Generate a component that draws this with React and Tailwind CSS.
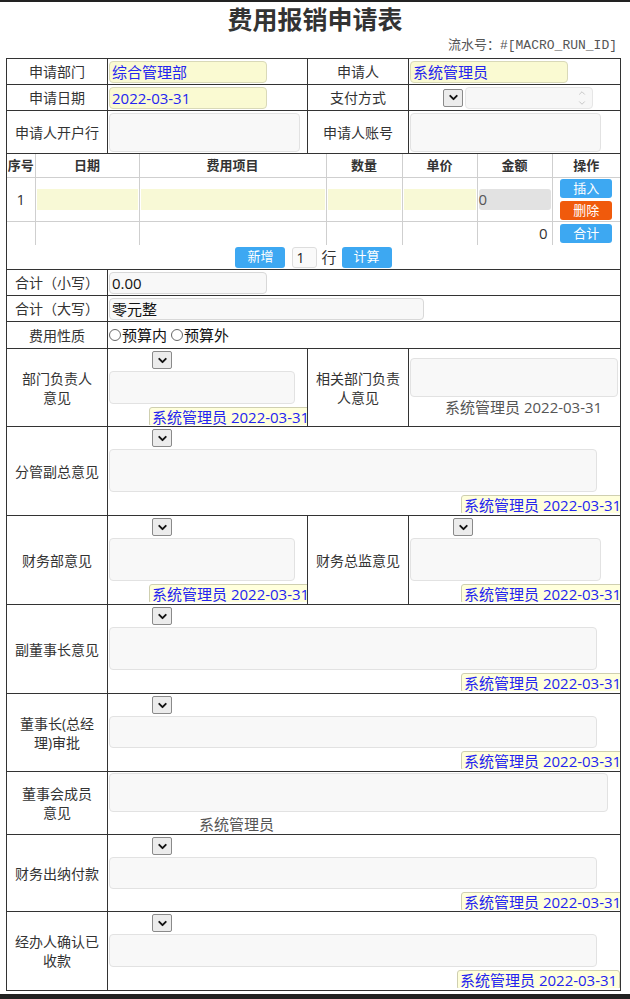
import React from "react";
import { ChevronDown, ChevronUp } from "lucide-react";

const LBL =
  "border border-[#333] px-[2px] text-center align-middle text-[14px] leading-[19px] text-[#333]";
const CELL = "border border-[#333] p-0 align-middle";
const CELLTOP = "border border-[#333] p-0 align-top";
const TH =
  "border border-[#cfcfcf] p-0 text-center align-middle text-[13px] font-bold text-[#333]";
const TD = "border border-[#cfcfcf] p-0 align-middle";
const BLUE =
  "flex h-[19px] w-[52px] items-center justify-center rounded-[3px] bg-[#3da8f2] text-[13px] leading-[19px] text-white";
const ORANGE =
  "flex h-[19px] w-[52px] items-center justify-center rounded-[3px] bg-[#f05a0c] text-[13px] leading-[19px] text-white";

function Sel({ w = "w-[63px]" }) {
  return (
    <div className={`flex h-[18px] shrink-0 ${w}`}>
      <div className="flex-1" />
      <div className="flex w-[20px] items-center justify-center rounded-[2px] border border-[#8a8a8a] bg-[#ececec]">
        <ChevronDown size={13} strokeWidth={3.5} color="#111" />
      </div>
    </div>
  );
}

function YIn({ children }) {
  return (
    <div className="h-[22px] w-[158px] overflow-hidden whitespace-nowrap rounded-[4px] border border-[#d9d9b8] bg-[#fafad2] px-[2px] text-[15px] leading-[20px] text-[#2424f0]">
      {children}
    </div>
  );
}

function Sig({ ml }) {
  return (
    <div className="mt-[1px] h-[20px] overflow-hidden whitespace-nowrap">
      <span
        className={`inline-block h-[20px] rounded-[3px] border border-[#cfcfb0] bg-[#ffffdc] px-[2px] text-[15px] leading-[18px] text-[#2424f0] ${ml}`}
      >
        系统管理员 2022-03-31
      </span>
    </div>
  );
}

function Op({ taH, taW, sigMl }) {
  return (
    <div className="flex flex-col overflow-hidden pl-[1px] pt-[2px]">
      <Sel />
      <div
        className={`mt-[2px] ${taH} ${taW} rounded-[4px] border border-[#e2e2e2] bg-[#f8f8f8]`}
      />
      <Sig ml={sigMl} />
    </div>
  );
}

function Radio({ children }) {
  return (
    <span className="inline-flex items-center">
      <span className="mr-[1px] inline-block h-[12px] w-[12px] rounded-full border border-[#666] bg-white" />
      {children}
    </span>
  );
}

export default function App() {
  return (
    <div className="h-[999px] w-[630px] overflow-hidden bg-white font-['Open_Sans','Noto_Sans_CJK_SC',sans-serif] text-[#333]">
      <div className="h-[2px] bg-[#222]" />
      <div className="pt-[1px] text-center font-['Noto_Sans_CJK_SC',sans-serif] text-[25px] font-bold leading-[30px] text-[#333]">
        费用报销申请表
      </div>
      <div className="mt-[4px] pr-[13px] text-right font-['Liberation_Mono','Noto_Sans_CJK_SC',monospace] text-[13px] leading-[18px] text-[#555]">
        流水号：#[MACRO_RUN_ID]
      </div>
      <table className="ml-[6px] mt-[3px] w-[615px] table-fixed border-collapse">
        <colgroup>
          <col className="w-[101px]" />
          <col className="w-[200px]" />
          <col className="w-[101px]" />
          <col />
        </colgroup>
        <tbody>
          <tr className="h-[26px]">
            <td className={LBL}>申请部门</td>
            <td className={CELL}>
              <div className="pl-[1px]">
                <YIn>综合管理部</YIn>
              </div>
            </td>
            <td className={LBL}>申请人</td>
            <td className={CELL}>
              <div className="pl-[1px]">
                <YIn>系统管理员</YIn>
              </div>
            </td>
          </tr>
          <tr className="h-[26px]">
            <td className={LBL}>申请日期</td>
            <td className={CELL}>
              <div className="pl-[1px]">
                <YIn>2022-03-31</YIn>
              </div>
            </td>
            <td className={LBL}>支付方式</td>
            <td className={CELL}>
              <div className="flex items-center pl-[1px]">
                <Sel w="w-[53px]" />
                <div className="ml-[2px] flex h-[22px] w-[128px] items-center justify-end rounded-[4px] border border-[#e6e6e6] bg-[#f7f7f7] pr-[5px]">
                  <div className="flex flex-col items-center text-[#bdbdbd]">
                    <ChevronUp size={10} strokeWidth={2} />
                    <ChevronDown size={10} strokeWidth={2} />
                  </div>
                </div>
              </div>
            </td>
          </tr>
          <tr className="h-[43px]">
            <td className={LBL}>申请人开户行</td>
            <td className={CELL}>
              <div className="pl-[1px]">
                <div className="h-[39px] w-[191px] rounded-[4px] border border-[#e2e2e2] bg-[#f8f8f8]" />
              </div>
            </td>
            <td className={LBL}>申请人账号</td>
            <td className={CELL}>
              <div className="pl-[1px]">
                <div className="h-[39px] w-[191px] rounded-[4px] border border-[#e2e2e2] bg-[#f8f8f8]" />
              </div>
            </td>
          </tr>
          <tr>
            <td colSpan={4} className={CELLTOP}>
              <table className="w-full table-fixed border-collapse border-hidden">
                <colgroup>
                  <col className="w-[28px]" />
                  <col className="w-[104px]" />
                  <col className="w-[187px]" />
                  <col className="w-[76px]" />
                  <col className="w-[75px]" />
                  <col className="w-[75px]" />
                  <col />
                </colgroup>
                <tbody>
                  <tr className="h-[23px]">
                    <th className={TH}>序号</th>
                    <th className={TH}>日期</th>
                    <th className={TH}>费用项目</th>
                    <th className={TH}>数量</th>
                    <th className={TH}>单价</th>
                    <th className={TH}>金额</th>
                    <th className={TH}>操作</th>
                  </tr>
                  <tr className="h-[44px]">
                    <td className={TD + " text-center text-[15px] text-[#333]"}>1</td>
                    <td className={TD}>
                      <div className="mx-[1px] h-[21px] bg-[#f8f9d6]" />
                    </td>
                    <td className={TD}>
                      <div className="mx-[1px] h-[21px] bg-[#f8f9d6]" />
                    </td>
                    <td className={TD}>
                      <div className="mx-[1px] h-[21px] bg-[#f8f9d6]" />
                    </td>
                    <td className={TD}>
                      <div className="mx-[1px] h-[21px] bg-[#f8f9d6]" />
                    </td>
                    <td className={TD}>
                      <div className="mx-[1px] h-[21px] rounded-[3px] bg-[#e2e2e2] text-[15px] leading-[21px] text-[#555]">
                        0
                      </div>
                    </td>
                    <td className={TD}>
                      <div className="flex flex-col items-center gap-[3px]">
                        <div className={BLUE}>插入</div>
                        <div className={ORANGE}>删除</div>
                      </div>
                    </td>
                  </tr>
                  <tr className="h-[24px]">
                    <td className={TD}></td>
                    <td className={TD}></td>
                    <td className={TD}></td>
                    <td className={TD}></td>
                    <td className={TD}></td>
                    <td className={TD + " pr-[4px] text-right text-[15px] text-[#333]"}>0</td>
                    <td className={TD}>
                      <div className="flex justify-center">
                        <div className={BLUE}>合计</div>
                      </div>
                    </td>
                  </tr>
                </tbody>
              </table>
              <div className="flex h-[24px] items-center justify-center">
                <div className="flex h-[21px] w-[50px] items-center justify-center rounded-[3px] bg-[#3da8f2] text-[13px] text-white">
                  新增
                </div>
                <div className="ml-[7px] h-[21px] w-[25px] rounded-[3px] border border-[#ddd] bg-[#fafafa] pl-[3px] text-[14px] leading-[19px] text-[#222]">
                  1
                </div>
                <span className="ml-[4px] text-[15px] leading-[21px] text-[#333]">行</span>
                <div className="ml-[5px] flex h-[21px] w-[50px] items-center justify-center rounded-[3px] bg-[#3da8f2] text-[13px] text-white">
                  计算
                </div>
              </div>
            </td>
          </tr>
          <tr className="h-[26px]">
            <td className={LBL}>合计（小写）</td>
            <td colSpan={3} className={CELL}>
              <div className="pl-[1px]">
                <div className="h-[22px] w-[158px] rounded-[4px] border border-[#d8d8d8] bg-[#f8f8f8] px-[2px] text-[15px] leading-[20px] text-[#111]">
                  0.00
                </div>
              </div>
            </td>
          </tr>
          <tr className="h-[26px]">
            <td className={LBL}>合计（大写）</td>
            <td colSpan={3} className={CELL}>
              <div className="pl-[1px]">
                <div className="h-[22px] w-[315px] rounded-[4px] border border-[#d8d8d8] bg-[#f8f8f8] px-[2px] text-[15px] leading-[20px] text-[#111]">
                  零元整
                </div>
              </div>
            </td>
          </tr>
          <tr className="h-[27px]">
            <td className={LBL}>费用性质</td>
            <td colSpan={3} className={CELL}>
              <div className="flex items-center gap-[4px] pl-[1px] text-[15px] leading-[20px] text-[#111]">
                <Radio>预算内</Radio>
                <Radio>预算外</Radio>
              </div>
            </td>
          </tr>
          <tr className="h-[78px]">
            <td className={LBL}>
              部门负责人
              <br />
              意见
            </td>
            <td className={CELLTOP}>
              <Op taH="h-[33px]" taW="w-[186px]" sigMl="ml-[40px]" />
            </td>
            <td className={LBL}>
              相关部门负责
              <br />
              人意见
            </td>
            <td className={CELL}>
              <div className="pl-[1px]">
                <div className="h-[39px] w-[208px] rounded-[4px] border border-[#e2e2e2] bg-[#f8f8f8]" />
                <div className="mt-[1px] pl-[35px] text-[15px] leading-[19px] text-[#555]">
                  系统管理员 2022-03-31
                </div>
              </div>
            </td>
          </tr>
          <tr className="h-[89px]">
            <td className={LBL}>分管副总意见</td>
            <td colSpan={3} className={CELLTOP}>
              <Op taH="h-[43px]" taW="w-[488px]" sigMl="ml-[352px]" />
            </td>
          </tr>
          <tr className="h-[89px]">
            <td className={LBL}>财务部意见</td>
            <td className={CELLTOP}>
              <Op taH="h-[43px]" taW="w-[186px]" sigMl="ml-[40px]" />
            </td>
            <td className={LBL}>财务总监意见</td>
            <td className={CELLTOP}>
              <Op taH="h-[43px]" taW="w-[191px]" sigMl="ml-[51px]" />
            </td>
          </tr>
          <tr className="h-[89px]">
            <td className={LBL}>副董事长意见</td>
            <td colSpan={3} className={CELLTOP}>
              <Op taH="h-[43px]" taW="w-[488px]" sigMl="ml-[352px]" />
            </td>
          </tr>
          <tr className="h-[78px]">
            <td className={LBL}>
              董事长(总经
              <br />
              理)审批
            </td>
            <td colSpan={3} className={CELLTOP}>
              <Op taH="h-[32px]" taW="w-[488px]" sigMl="ml-[352px]" />
            </td>
          </tr>
          <tr className="h-[62px]">
            <td className={LBL}>
              董事会成员
              <br />
              意见
            </td>
            <td colSpan={3} className={CELLTOP}>
              <div className="pl-[1px] pt-[1px]">
                <div className="h-[39px] w-[499px] rounded-[4px] border border-[#e2e2e2] bg-[#f8f8f8]" />
                <div className="mt-[3px] pl-[90px] text-[15px] leading-[19px] text-[#555]">
                  系统管理员
                </div>
              </div>
            </td>
          </tr>
          <tr className="h-[77px]">
            <td className={LBL}>财务出纳付款</td>
            <td colSpan={3} className={CELLTOP}>
              <Op taH="h-[32px]" taW="w-[488px]" sigMl="ml-[352px]" />
            </td>
          </tr>
          <tr className="h-[79px]">
            <td className={LBL}>
              经办人确认已
              <br />
              收款
            </td>
            <td colSpan={3} className={CELLTOP}>
              <Op taH="h-[33px]" taW="w-[488px]" sigMl="ml-[348px]" />
            </td>
          </tr>
        </tbody>
      </table>
      <div className="mt-[3px] h-[6px] bg-[#222]" />
    </div>
  );
}
